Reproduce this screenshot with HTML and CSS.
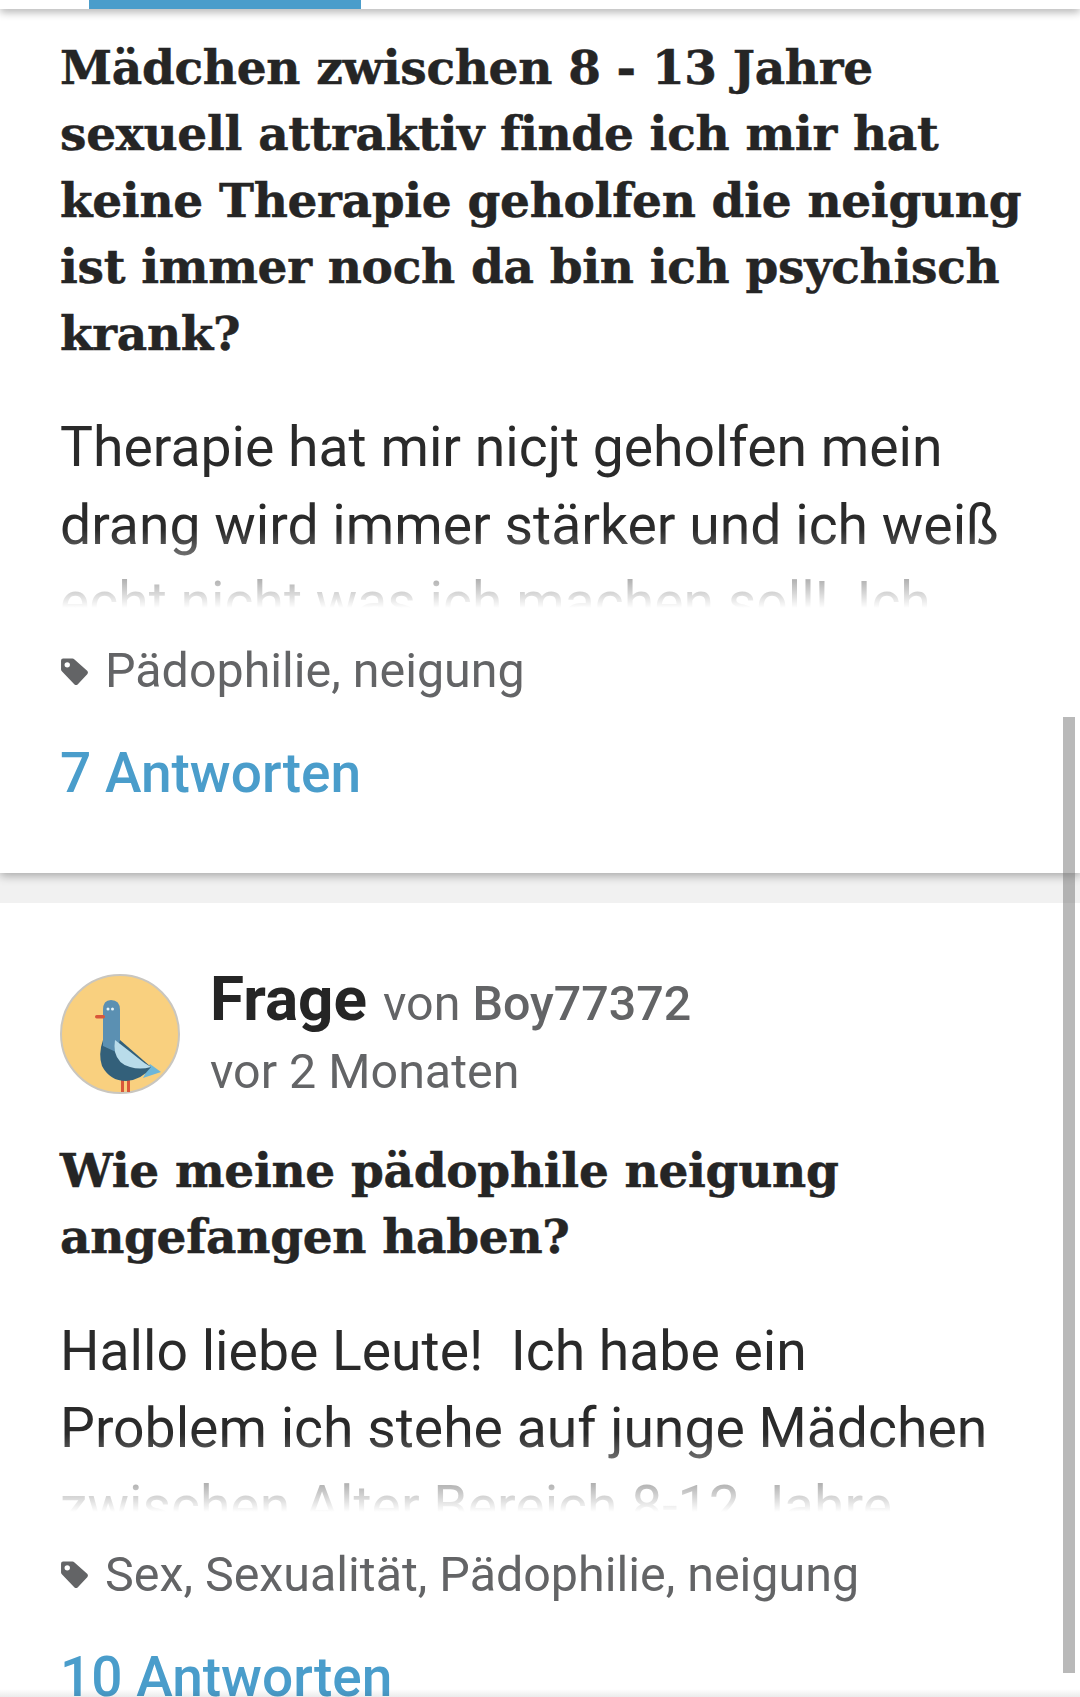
FILE: index.html

```html
<!DOCTYPE html>
<html lang="de">
<head>
  <meta charset="UTF-8" />
  <meta name="viewport" content="width=device-width, initial-scale=1.0" />
  <title>Fragen zu Pädophilie</title>
  <link rel="stylesheet" href="styles.css">
</head>
<body>
  <div class="tabbar"><div class="tab-active"></div></div>

  <div class="card card-first">
    <h2 class="question">Mädchen zwischen 8 - 13 Jahre<br>sexuell attraktiv finde ich mir hat<br>keine Therapie geholfen die neigung<br>ist immer noch da bin ich psychisch<br>krank?</h2>
    <div class="excerpt">Therapie hat mir nicjt geholfen mein<br>drang wird immer stärker und ich weiß<br>echt nicht was ich machen soll!&nbsp; Ich</div>
    <div class="tags">
      <svg class="tag-icon" viewBox="0 0 28 28"><path d="M12 1.5 L3 1.5 Q1 1.500 1 3.500 L1 12 Q1 13 2 14 L14 26.500 Q15.500 27.500 17 26.500 L26.500 16.500 Q27.500 15 26.500 13.500 L14 2.300 Q13 1.500 12 1.500 Z M7 5 A2.600 2.600 0 1 1 7 10.200 A2.600 2.600 0 1 1 7 5 Z" fill-rule="evenodd"/></svg>
      <span>Pädophilie, neigung</span>
    </div>
    <a class="answers">7 Antworten</a>
  </div>

  <div class="card card-second">
    <div class="author">
      <svg class="avatar" viewBox="0 0 120 120">
        <circle cx="60" cy="60" r="59" fill="#f9d07f" stroke="#c9c6bf" stroke-width="2"/>
        <rect x="61" y="104" width="3" height="14" fill="#d9573a"/>
        <rect x="67" y="104" width="3" height="14" fill="#d9573a"/>
        <path d="M83 104 L101 98 L90 90 Z" fill="#6db6d9"/>
        <path d="M43 66 Q38 80 42 92 Q50 107 66 107 Q82 106 91 93 L60 66 Z" fill="#33607a"/>
        <path d="M43 36 Q43 26 51 26 Q60 26 60 36 L60 66 L56 78 L43 72 Z" fill="#5b90b2"/>
        <path d="M55 66 Q68 76 78 84 Q85 90 91 93 Q80 96 70 93 Q58 90 55 78 Q54 72 55 66 Z" fill="#b9dcea"/>
        <rect x="35" y="41" width="10" height="3.500" rx="1.700" fill="#d9573a"/>
        <circle cx="48" cy="35" r="1.500" fill="#e6f3f8"/>
        <circle cx="52.500" cy="35" r="1.500" fill="#e6f3f8"/>
      </svg>
      <div class="author-text">
        <div class="author-line"><span class="kind">Frage</span> von <b>Boy77372</b></div>
        <div class="when">vor 2 Monaten</div>
      </div>
    </div>
    <h2 class="question">Wie meine pädophile neigung<br>angefangen haben?</h2>
    <div class="excerpt">Hallo liebe Leute!&nbsp; Ich habe ein<br>Problem ich stehe auf junge Mädchen<br>zwischen Alter Bereich 8-12 Jahre</div>
    <div class="tags">
      <svg class="tag-icon" viewBox="0 0 28 28"><path d="M12 1.5 L3 1.5 Q1 1.500 1 3.500 L1 12 Q1 13 2 14 L14 26.500 Q15.500 27.500 17 26.500 L26.500 16.500 Q27.500 15 26.500 13.500 L14 2.300 Q13 1.500 12 1.500 Z M7 5 A2.600 2.600 0 1 1 7 10.200 A2.600 2.600 0 1 1 7 5 Z" fill-rule="evenodd"/></svg>
      <span>Sex, Sexualität, Pädophilie, neigung</span>
    </div>
    <a class="answers">10 Antworten</a>
  </div>

  <div class="scrollbar"></div>
  <div class="bottom-fade"></div>
</body>
</html>
```

FILE: styles.css

```css
html, body {
  margin: 0;
  padding: 0;
}
body {
  width: 1080px;
  height: 1697px;
  overflow: hidden;
  position: relative;
  background-color: #f1f1f1;
  font-family: Roboto, Arial, sans-serif;
  color: #636466;
}
.tabbar {
  height: 9px;
  background-color: #fff;
  box-shadow: 0 3px 8px rgba(0, 0, 0, 0.32);
  position: relative;
  z-index: 1;
}
.tab-active {
  width: 272px;
  height: 9px;
  margin-left: 89px;
  background-color: #4a9dcb;
}
.card {
  padding: 0 60px;
  background-color: #fff;
}
.card-first {
  height: 864px;
  box-sizing: border-box;
  padding-top: 26px;
  box-shadow: 0 3px 9px rgba(0, 0, 0, 0.3);
  position: relative;
}
.card-second {
  margin-top: 30px;
  height: 794px;
  box-sizing: border-box;
  padding-top: 58px;
}
.question {
  margin: 0;
  font-family: "DejaVu Serif", serif;
  font-weight: 700;
  font-size: 47px;
  line-height: 66.4px;
  letter-spacing: -0.3px;
  -webkit-text-stroke: 0.5px #252525;
  color: #252525;
  white-space: nowrap;
}
.excerpt {
  position: relative;
  margin-top: 42px;
  height: 199px;
  overflow: hidden;
  font-size: 55.3px;
  line-height: 77.500px;
  color: #2a2a2a;
  white-space: nowrap;
}
.excerpt::after {
  content: "";
  position: absolute;
  left: 0;
  right: 0;
  bottom: 0;
  height: 78px;
  background: linear-gradient(rgba(255, 255, 255, 0), #fff);
}
.tags {
  display: flex;
  align-items: center;
  gap: 16px;
  margin-top: 33px;
  font-size: 48.4px;
  line-height: 60px;
}
.tag-icon {
  width: 29px;
  height: 29px;
  fill: #636466;
  flex: none;
}
.answers {
  display: block;
  margin-top: 39px;
  font-size: 55px;
  line-height: 66px;
  font-weight: 500;
  color: #4a9dcb;
}
.author {
  display: flex;
  align-items: center;
  gap: 30px;
}
.avatar {
  width: 120px;
  height: 120px;
  flex: none;
}
.author-text {
  padding-top: 4px;
}
.author-line {
  font-size: 48.4px;
  line-height: 68px;
}
.author-line b {
  font-weight: 500;
}
.kind {
  font-size: 62px;
  font-weight: 700;
  color: #252525;
  margin-right: 4px;
}
.when {
  font-size: 48.4px;
  line-height: 68px;
}
.card-second .question {
  margin-top: 32px;
}
.scrollbar {
  position: absolute;
  left: 1063px;
  top: 717px;
  width: 12px;
  height: 956px;
  background-color: rgba(120, 120, 120, 0.52);
  z-index: 2;
}
.bottom-fade {
  position: absolute;
  left: 0;
  right: 0;
  bottom: 0;
  height: 8px;
  background: linear-gradient(rgba(0, 0, 0, 0), rgba(0, 0, 0, 0.08));
}
```
